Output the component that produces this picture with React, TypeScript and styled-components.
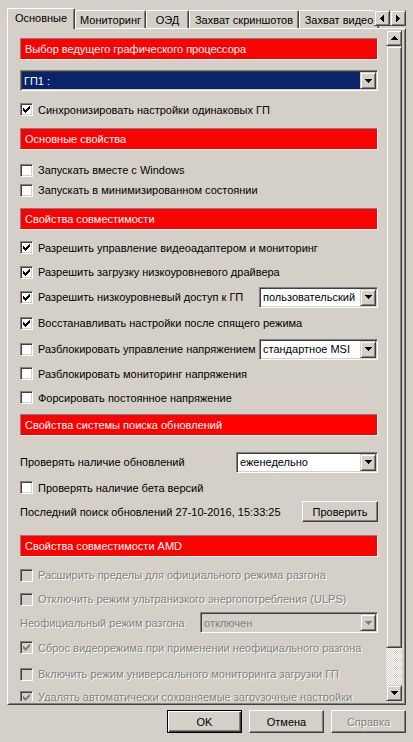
import React from "react";
import styled, { createGlobalStyle, css } from "styled-components";

const GlobalStyle = createGlobalStyle`
  html, body {
    margin: 0;
    padding: 0;
    background: #d4d0c8;
  }
  body {
    font-family: "Liberation Sans", Arial, sans-serif;
    font-size: 11px;
    color: #000;
  }
  * {
    box-sizing: border-box;
  }
`;

// classic 3d edges
const raised = css`
  border: 1px solid;
  border-color: #d4d0c8 #404040 #404040 #d4d0c8;
  box-shadow: inset 1px 1px #fff, inset -1px -1px #808080;
`;

const sunken = css`
  border: 1px solid;
  border-color: #808080 #fff #fff #808080;
  box-shadow: inset 1px 1px #404040, inset -1px -1px #d4d0c8;
`;

const disabledText = css`
  color: #808080;
  text-shadow: 1px 1px 0 #fff;
`;

const Window = styled.div`
  width: 413px;
  height: 742px;
  padding: 8px 7px 0 7px;
  display: flex;
  flex-direction: column;
  overflow: hidden;
  background: #d4d0c8;
`;

const TabStrip = styled.div`
  position: relative;
  z-index: 2;
  height: 20px;
  display: flex;
  align-items: flex-end;
`;

const Tab = styled.div<{ $w: number; $active?: boolean }>`
  position: relative;
  z-index: ${(p) => (p.$active ? 2 : 1)};
  width: ${(p) => p.$w}px;
  height: ${(p) => (p.$active ? 21 : 18)}px;
  margin-bottom: ${(p) => (p.$active ? -1 : 0)}px;
  padding-bottom: ${(p) => (p.$active ? 2 : 0)}px;
  flex: none;
  display: flex;
  align-items: center;
  justify-content: center;
  background: #d4d0c8;
  border-top: 1px solid #fff;
  border-left: 1px solid #fff;
  border-right: 1px solid #404040;
  box-shadow: inset -1px 0 #808080;
  border-top-left-radius: 2px;
  border-top-right-radius: 2px;
  white-space: nowrap;
  overflow: hidden;
`;

const TabScroll = styled.div`
  position: absolute;
  right: 0;
  top: 2px;
  z-index: 3;
  display: flex;
`;

const ArrowButton = styled.div<{ $h?: number }>`
  width: 16px;
  height: ${(p) => p.$h ?? 16}px;
  flex: none;
  display: flex;
  align-items: center;
  justify-content: center;
  background: #d4d0c8;
  ${raised};
`;

const Panel = styled.div`
  position: relative;
  z-index: 1;
  height: 677px;
  display: flex;
  border: 1px solid;
  border-color: #fff #404040 #404040 #fff;
  box-shadow: inset 1px 1px #d4d0c8, inset -1px -1px #808080;
  padding: 1px 3px 3px 1px;
`;

const Content = styled.div`
  flex: 1;
  overflow: hidden;
  padding: 8px 8px 0 11px;
`;

const ScrollBar = styled.div`
  width: 16px;
  flex: none;
  display: flex;
  flex-direction: column;
`;

const Thumb = styled.div`
  height: 602px;
  background: #d4d0c8;
  ${raised};
`;

const Track = styled.div`
  flex: 1;
  background: repeating-conic-gradient(#fff 0 25%, #d4d0c8 0 50%) 0 0 / 2px 2px;
`;

const SectionBar = styled.div`
  height: 22px;
  display: flex;
  align-items: center;
  padding-left: 4px;
  background: #ff0000;
  color: #fff;
  border: 1px solid;
  border-color: #808080 #fff #fff #808080;
  white-space: nowrap;
`;

const Group = styled.div<{ $pt: number; $pb: number }>`
  padding: ${(p) => p.$pt}px 0 ${(p) => p.$pb}px;
`;

const Row = styled.div<{ $h: number }>`
  height: ${(p) => p.$h}px;
  display: flex;
  align-items: center;
`;

const Label = styled.span<{ $disabled?: boolean }>`
  white-space: nowrap;
  ${(p) => p.$disabled && disabledText};
`;

const Box = styled.span<{ $disabled?: boolean }>`
  width: 13px;
  height: 13px;
  flex: none;
  margin-right: 5px;
  background: ${(p) => (p.$disabled ? "#d4d0c8" : "#fff")};
  ${sunken};
  & svg {
    display: block;
    margin: 2px 0 0 2px;
  }
`;

const Combo = styled.div<{ $w?: number; $disabled?: boolean }>`
  width: ${(p) => (p.$w ? `${p.$w}px` : "100%")};
  height: 21px;
  flex: none;
  margin-left: ${(p) => (p.$w ? "auto" : "0")};
  display: flex;
  padding: 1px;
  background: ${(p) => (p.$disabled ? "#d4d0c8" : "#fff")};
  ${sunken};
`;

const ComboField = styled.div<{ $selected?: boolean; $disabled?: boolean }>`
  flex: 1;
  display: flex;
  align-items: center;
  padding-left: 2px;
  white-space: nowrap;
  overflow: hidden;
  background: ${(p) => (p.$selected ? "#0a246a" : "transparent")};
  color: ${(p) => (p.$selected ? "#fff" : p.$disabled ? "#808080" : "#000")};
`;

const ComboWrap = styled.div`
  margin-top: 10px;
`;

const PushButton = styled.button<{ $w: number; $h: number; $default?: boolean; $disabled?: boolean; $push?: boolean }>`
  width: ${(p) => p.$w}px;
  height: ${(p) => p.$h}px;
  flex: none;
  margin: 0 0 0 ${(p) => (p.$push ? "auto" : "0")};
  padding: 0;
  font-family: inherit;
  font-size: 11px;
  font-weight: normal;
  color: #000;
  background: #d4d0c8;
  ${(p) =>
    p.$default
      ? css`
          border: 1px solid #000;
          box-shadow: inset 1px 1px #fff, inset -1px -1px #404040, inset -2px -2px #808080;
        `
      : css`
          border: 1px solid;
          border-color: #fff #404040 #404040 #fff;
          box-shadow: inset -1px -1px #808080;
        `}
  ${(p) => p.$disabled && disabledText};
`;

const Footer = styled.div`
  margin-top: 5px;
  display: flex;
  justify-content: flex-end;
  gap: 7px;
`;

const ARROWS: Record<string, { w: number; h: number; d: string }> = {
  up: { w: 7, h: 4, d: "M3 0h1v1h-1z M2 1h3v1h-3z M1 2h5v1h-5z M0 3h7v1h-7z" },
  down: { w: 7, h: 4, d: "M0 0h7v1h-7z M1 1h5v1h-5z M2 2h3v1h-3z M3 3h1v1h-1z" },
  left: { w: 4, h: 7, d: "M0 3h1v1h-1z M1 2h1v3h-1z M2 1h1v5h-1z M3 0h1v7h-1z" },
  right: { w: 4, h: 7, d: "M3 3h1v1h-1z M2 2h1v3h-1z M1 1h1v5h-1z M0 0h1v7h-1z" },
};

const Arrow = ({ dir, color = "#000" }: { dir: string; color?: string }) => {
  const a = ARROWS[dir];
  return (
    <svg width={a.w} height={a.h} viewBox={`0 0 ${a.w} ${a.h}`} shapeRendering="crispEdges">
      <path d={a.d} fill={color} />
    </svg>
  );
};

const CheckMark = ({ color }: { color: string }) => (
  <svg width="7" height="7" viewBox="0 0 7 7" shapeRendering="crispEdges">
    <path
      d="M6 0h1v1h-1z M5 1h2v1h-2z M0 2h1v1h-1z M4 2h3v1h-3z M0 3h2v1h-2z M3 3h3v1h-3z M0 4h5v1h-5z M1 5h3v1h-3z M2 6h1v1h-1z"
      fill={color}
    />
  </svg>
);

const CheckBox = ({ checked, disabled }: { checked?: boolean; disabled?: boolean }) => (
  <Box $disabled={disabled}>{checked && <CheckMark color={disabled ? "#808080" : "#000"} />}</Box>
);

const Select = ({
  value,
  w,
  selected,
  disabled,
}: {
  value: string;
  w?: number;
  selected?: boolean;
  disabled?: boolean;
}) => (
  <Combo $w={w} $disabled={disabled}>
    <ComboField $selected={selected} $disabled={disabled}>
      {value}
    </ComboField>
    <ArrowButton $h={17}>
      <Arrow dir="down" color={disabled ? "#808080" : "#000"} />
    </ArrowButton>
  </Combo>
);

type CheckItem = { h: number; text: string; checked?: boolean; combo?: string };

const compat: CheckItem[] = [
  { h: 25, text: "Разрешить управление видеоадаптером и мониторинг", checked: true },
  { h: 24, text: "Разрешить загрузку низкоуровневого драйвера", checked: true },
  { h: 26, text: "Разрешить низкоуровневый доступ к ГП", checked: true, combo: "пользовательский" },
  { h: 26, text: "Восстанавливать настройки после спящего режима", checked: true },
  { h: 26, text: "Разблокировать управление напряжением", combo: "стандартное MSI" },
  { h: 23, text: "Разблокировать мониторинг напряжения" },
  { h: 25, text: "Форсировать постоянное напряжение" },
];

const tabs = [
  { w: 68, label: "Основные", active: true },
  { w: 71, label: "Мониторинг" },
  { w: 43, label: "ОЭД" },
  { w: 110, label: "Захват скриншотов" },
  { w: 80, label: "Захват видео" },
];

export default function App() {
  return (
    <Window>
      <GlobalStyle />
      <TabStrip>
        {tabs.map((t) => (
          <Tab key={t.label} $w={t.w} $active={t.active}>
            {t.label}
          </Tab>
        ))}
        <TabScroll>
          <ArrowButton>
            <Arrow dir="left" />
          </ArrowButton>
          <ArrowButton>
            <Arrow dir="right" />
          </ArrowButton>
        </TabScroll>
      </TabStrip>

      <Panel>
        <Content>
          <SectionBar>Выбор ведущего графического процессора</SectionBar>
          <ComboWrap>
            <Select value="ГП1 :" selected />
          </ComboWrap>
          <Row $h={37}>
            <CheckBox checked />
            <Label>Синхронизировать настройки одинаковых ГП</Label>
          </Row>

          <SectionBar>Основные свойства</SectionBar>
          <Group $pt={10} $pb={8}>
            <Row $h={20}>
              <CheckBox />
              <Label>Запускать вместе с Windows</Label>
            </Row>
            <Row $h={20}>
              <CheckBox />
              <Label>Запускать в минимизированном состоянии</Label>
            </Row>
          </Group>

          <SectionBar>Свойства совместимости</SectionBar>
          <Group $pt={5} $pb={4}>
            {compat.map((c) => (
              <Row key={c.text} $h={c.h}>
                <CheckBox checked={c.checked} />
                <Label>{c.text}</Label>
                {c.combo && <Select value={c.combo} w={119} />}
              </Row>
            ))}
          </Group>

          <SectionBar>Свойства системы поиска обновлений</SectionBar>
          <Group $pt={14} $pb={13}>
            <Row $h={24}>
              <Label>Проверять наличие обновлений</Label>
              <Select value="еженедельно" w={142} />
            </Row>
            <Row $h={27}>
              <CheckBox />
              <Label>Проверять наличие бета версий</Label>
            </Row>
            <Row $h={21}>
              <Label>Последний поиск обновлений 27-10-2016, 15:33:25</Label>
              <PushButton $w={76} $h={21} $push>
                Проверить
              </PushButton>
            </Row>
          </Group>

          <SectionBar>Свойства совместимости AMD</SectionBar>
          <Group $pt={6} $pb={0}>
            <Row $h={24}>
              <CheckBox disabled />
              <Label $disabled>Расширить пределы для официального режима разгона</Label>
            </Row>
            <Row $h={24}>
              <CheckBox disabled />
              <Label $disabled>Отключить режим ультранизкого энергопотребления (ULPS)</Label>
            </Row>
            <Row $h={23}>
              <Label $disabled>Неофициальный режим разгона</Label>
              <Select value="отключен" w={178} disabled />
            </Row>
            <Row $h={27}>
              <CheckBox checked disabled />
              <Label $disabled>Сброс видеорежима при применении неофициального разгона</Label>
            </Row>
            <Row $h={26}>
              <CheckBox disabled />
              <Label $disabled>Включить режим универсального мониторинга загрузки ГП</Label>
            </Row>
            <Row $h={20}>
              <CheckBox checked disabled />
              <Label $disabled>Удалять автоматически сохраняемые загрузочные настройки</Label>
            </Row>
          </Group>
        </Content>

        <ScrollBar>
          <ArrowButton>
            <Arrow dir="up" />
          </ArrowButton>
          <Thumb />
          <Track />
          <ArrowButton>
            <Arrow dir="down" />
          </ArrowButton>
        </ScrollBar>
      </Panel>

      <Footer>
        <PushButton $w={75} $h={23} $default>
          OK
        </PushButton>
        <PushButton $w={75} $h={23}>
          Отмена
        </PushButton>
        <PushButton $w={75} $h={23} $disabled>
          Справка
        </PushButton>
      </Footer>
    </Window>
  );
}
